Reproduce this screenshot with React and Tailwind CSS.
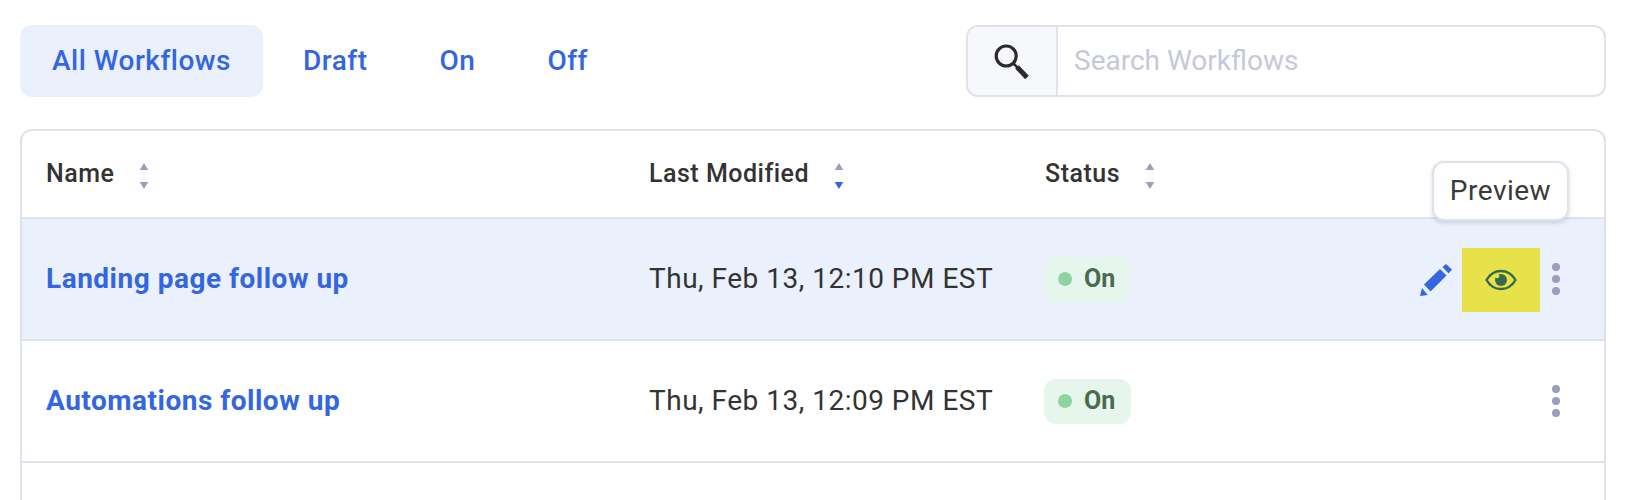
const rows = [
  { name: 'Landing page follow up', date: 'Thu, Feb 13, 12:10 PM EST', active: true },
  { name: 'Automations follow up', date: 'Thu, Feb 13, 12:09 PM EST', active: false },
]

function SortCaret({ activeDown }) {
  return (
    <svg className="w-[10px] h-[28px] shrink-0 mt-[2px]" viewBox="0 0 10 28">
      <path d="M5 2L9.3 9H0.7z" fill="#9a9fbd" />
      <path d="M0.7 21H9.3L5 28z" fill={activeDown ? '#3366e0' : '#9a9fbd'} />
    </svg>
  )
}

function Dots() {
  return (
    <div className="w-[9px] flex flex-col gap-[4px] shrink-0">
      <span className="w-[8px] h-[8px] rounded-full bg-[#9a9dbb]" />
      <span className="w-[8px] h-[8px] rounded-full bg-[#9a9dbb]" />
      <span className="w-[8px] h-[8px] rounded-full bg-[#9a9dbb]" />
    </div>
  )
}

function PencilIcon() {
  return (
    <svg className="w-[34px] h-[34px]" viewBox="0 0 34 34" fill="#3366e0">
      <path d="M1 34L3 26L8.7 33z" />
      <path d="M5 22.5L21 7L27.5 13.5L11.5 29.5z" />
      <path d="M23.5 5L27 2L33 7.5L29.5 11.5z" />
    </svg>
  )
}

function EyeIcon() {
  return (
    <svg className="w-[32px] h-[22px]" viewBox="0 0 32 22" fill="none">
      <path d="M1.5 11C5 5 10 2 16 2C22 2 27 5 30.5 11C27 17 22 20 16 20C10 20 5 17 1.5 11z" stroke="#356b4c" strokeWidth="2.4" />
      <circle cx="16" cy="11" r="6" fill="#356b4c" />
      <circle cx="12.2" cy="7.2" r="2" fill="#e8e24a" />
    </svg>
  )
}

function SearchIcon() {
  return (
    <svg className="w-[36px] h-[36px]" viewBox="0 0 36 36" fill="none" stroke="#2b2b2b">
      <circle cx="12.2" cy="13" r="10" strokeWidth="3.2" />
      <path d="M19.5 20.5L24 25" strokeWidth="2.6" />
      <path d="M23 24L33 34.5" strokeWidth="5" />
    </svg>
  )
}

function Tab({ label, active }) {
  return (
    <button className={`h-[72px] px-[32px] rounded-[12px] text-[28px] font-medium tracking-[0.5px] text-[#3366e0] ${active ? 'bg-[#eaf1fd]' : ''}`}>
      {label}
    </button>
  )
}

export default function App() {
  return (
    <div className="min-h-screen h-[500px] overflow-hidden bg-white pt-[25px] pl-[20px] pr-[24px] font-['Roboto',sans-serif]">
      <div className="flex items-start justify-between">
        <div className="flex gap-[8px]">
          <Tab label="All Workflows" active />
          <Tab label="Draft" />
          <Tab label="On" />
          <Tab label="Off" />
        </div>
        <div className="w-[640px] h-[72px] flex border-2 border-[#dfe2ea] rounded-[12px] overflow-hidden">
          <div className="w-[90px] shrink-0 flex items-center justify-center bg-[#f7f8fc] border-r-2 border-[#dfe2ea]">
            <SearchIcon />
          </div>
          <div className="flex-1 flex items-center pl-[16px] text-[28px] text-[#c5c8db]">Search Workflows</div>
        </div>
      </div>

      <div className="relative mt-[32px] border-2 border-b-0 border-[#dfe2ea] rounded-t-[12px] bg-white">
        <div className="h-[86px] flex items-center text-[#333333] text-[25px] font-medium tracking-[0.5px]">
          <div className="w-[626px] pl-[24px] flex items-center gap-[25px]">
            Name <SortCaret />
          </div>
          <div className="w-[396px] pl-[1px] flex items-center gap-[25px]">
            Last Modified <SortCaret activeDown />
          </div>
          <div className="pl-[1px] flex items-center gap-[25px]">
            Status <SortCaret />
          </div>
        </div>

        {rows.map((r) => (
          <div
            key={r.name}
            className={`h-[122px] border-t-2 border-[#dfe2ea] flex items-center ${r.active ? 'bg-[#eaf1fd]' : ''}`}
          >
            <div className="w-[626px] pl-[24px] text-[28px] font-bold tracking-[0.5px] text-[#3366e0]">{r.name}</div>
            <div className="w-[396px] pl-[1px] text-[28px] tracking-[0.5px] text-[#333333]">{r.date}</div>
            <div className="flex-1">
              <div className="w-[87px] h-[45px] flex items-center gap-[12px] pl-[14px] rounded-[12px] bg-[#e7f6ed]">
                <span className="w-[14px] h-[14px] rounded-full bg-[#8ed3a0]" />
                <span className="text-[25px] font-bold text-[#4a6b52]">On</span>
              </div>
            </div>
            <div className="flex items-center pr-[43px]">
              {r.active && (
                <>
                  <PencilIcon />
                  <div className="w-[78px] h-[64px] ml-[9px] mr-[12px] mt-[1px] flex items-center justify-center bg-[#e8e24a]">
                    <EyeIcon />
                  </div>
                </>
              )}
              <Dots />
            </div>
          </div>
        ))}

        <div className="h-[40px] border-t-2 border-[#dfe2ea]" />

        <div className="absolute left-[1410px] top-[30px] w-[137px] h-[60px] flex items-center justify-center bg-white border-2 border-[#dfe2ea] rounded-[12px] shadow-[0_2px_4px_rgba(120,125,150,0.3)] text-[28px] tracking-[0.5px] text-[#3a3a3a]">
          Preview
        </div>
      </div>
    </div>
  )
}
